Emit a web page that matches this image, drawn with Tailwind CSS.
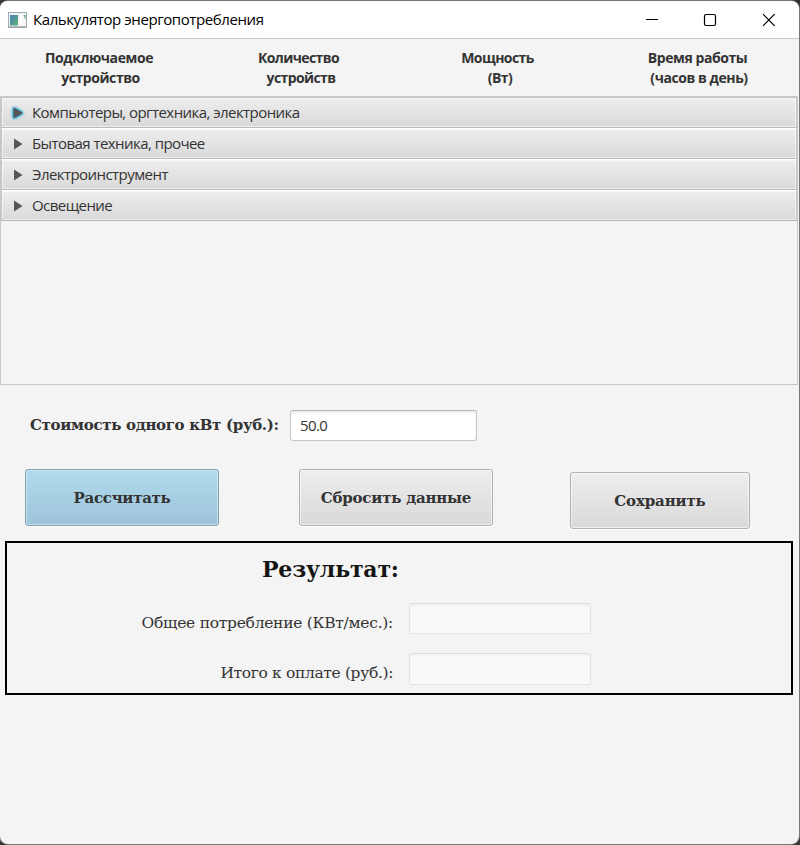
<!DOCTYPE html>
<html lang="ru">
<head>
<meta charset="utf-8">
<title>Калькулятор энергопотребления</title>
<script src="https://cdn.jsdelivr.net/npm/@tailwindcss/browser@4"></script>
</head>
<body class="w-[800px] h-[845px] overflow-hidden bg-[#353537] pt-px font-['Open_Sans','Noto_Sans',sans-serif] text-[#333]">
<div class="w-[799px] h-[843px] rounded-[8px] overflow-hidden bg-[#f4f4f4] flex flex-col shadow-[0_0_0_1px_#77777a]">
  <header class="h-[38px] shrink-0 bg-white border-b border-[#c8c8c8] flex items-center pl-2">
    <svg class="w-[19px] h-[16px] shrink-0" viewBox="0 0 19 16">
      <defs><linearGradient id="g" x1="0" y1="0" x2="1" y2="1"><stop offset="0" stop-color="#4a7fb5"/><stop offset="1" stop-color="#5cb370"/></linearGradient></defs>
      <rect x=".5" y=".5" width="18" height="14.5" fill="#f2f4f6" stroke="#a2a9b0"/>
      <path d="M.5 15.2H18.5" stroke="#858c92"/>
      <rect x="2" y="3" width="8" height="10.5" fill="url(#g)"/>
      <rect x="12" y="3" width="2.5" height="10" fill="#fff"/>
      <path d="M15.5 3H17.5V8Z" fill="#59a58e"/>
    </svg>
    <h1 class="ml-[6px] w-[240px] pb-[2px] whitespace-nowrap text-[15px] leading-5 tracking-[-0.41px] text-black">Калькулятор энергопотребления</h1>
    <svg class="ml-auto mr-[22px] w-[132px] h-[14px]" viewBox="0 0 132 14" fill="none" stroke="#000" stroke-width="1.2">
      <path d="M1 6.5H13"/><rect x="59.5" y="1.5" width="11" height="11" rx="1.5"/><path d="M118 1.2L129.6 12.8M129.6 1.2L118 12.8"/>
    </svg>
  </header>
  <div class="h-[57px] shrink-0 flex pt-[9px] text-[14px] leading-5 font-bold text-center whitespace-nowrap">
    <div class="w-[198px] tracking-[-0.42px]"><p>Подключаемое</p><p class="pl-[3px]">устройство</p></div>
    <div class="w-[201px] tracking-[-0.6px]"><p>Количество</p><p class="pl-[5px]">устройств</p></div>
    <div class="w-[197px] tracking-[-0.58px]"><p>Мощность</p><p class="pl-[5px]">(Вт)</p></div>
    <div class="w-[203px] tracking-[-0.43px]"><p>Время работы</p><p class="pl-[3px]">(часов в день)</p></div>
  </div>
  <section class="w-[798px] h-[289px] shrink-0 border border-[#c8c8c8] text-[15px] tracking-[-0.56px]">
    <div class="h-[31px] border border-t-[#c3c3c3] border-x-[#c8c8c8] border-b-[#bababa] bg-linear-to-b from-[#eeeeee] to-[#d9d9d9] shadow-[inset_0_0_0_1px_#fff8] flex items-center">
      <svg class="ml-[8px] w-[16px] h-[18px] overflow-visible" viewBox="0 0 16 18"><path d="M3.5 3.5V14.5L13 9Z" fill="#555" class="[filter:drop-shadow(0_0_1.5px_#039ed3)_drop-shadow(0_0_1px_#039ed3)]"/></svg><span class="ml-[6px]">Компьютеры, оргтехника, электроника</span></div>
    <div class="h-[31px] border border-t-white border-x-[#c8c8c8] border-b-[#bababa] bg-linear-to-b from-[#eeeeee] to-[#d9d9d9] shadow-[inset_0_0_0_1px_#fff8] flex items-center">
      <svg class="ml-[8px] w-[16px] h-[18px]" viewBox="0 0 16 18"><path d="M4 3.5V14.5L12.5 9Z" fill="#555"/></svg><span class="ml-[6px]">Бытовая техника, прочее</span></div>
    <div class="h-[31px] border border-t-white border-x-[#c8c8c8] border-b-[#bababa] bg-linear-to-b from-[#eeeeee] to-[#d9d9d9] shadow-[inset_0_0_0_1px_#fff8] flex items-center">
      <svg class="ml-[8px] w-[16px] h-[18px]" viewBox="0 0 16 18"><path d="M4 3.5V14.5L12.5 9Z" fill="#555"/></svg><span class="ml-[6px]">Электроинструмент</span></div>
    <div class="h-[31px] border border-t-white border-x-[#c8c8c8] border-b-[#b5b5b5] bg-linear-to-b from-[#eeeeee] to-[#d9d9d9] shadow-[inset_0_0_0_1px_#fff8] flex items-center">
      <svg class="ml-[8px] w-[16px] h-[18px]" viewBox="0 0 16 18"><path d="M4 3.5V14.5L12.5 9Z" fill="#555"/></svg><span class="ml-[6px]">Освещение</span></div>
  </section>
  <div class="mt-[25px] pl-[30px] flex h-[31px] shrink-0 items-center">
    <label class="w-[260px] whitespace-nowrap font-['DejaVu_Serif',serif] font-bold text-[15px] tracking-[-0.32px]">Стоимость одного кВт (руб.):</label>
    <div class="w-[187px] h-[31px] rounded-[3px] bg-white border border-[#c6c6c6] border-t-[#b5b5b5] shadow-[inset_0_2px_2px_#eee] pl-[9px] text-[15px] leading-[29px] tracking-[-0.6px]">50.0</div>
  </div>
  <div class="mt-[28px] pl-[25px] flex h-[60px] shrink-0 items-start font-['DejaVu_Serif',serif] font-bold text-[15px] whitespace-nowrap">
    <button class="w-[194px] h-[57px] pt-px rounded-[3px] border border-[#7fa3b1] bg-linear-to-b from-[#b1dbed] to-[#9dc3d8] shadow-[inset_0_0_0_1px_#ffffff66,0_1px_0_#fff] tracking-[-0.3px]">Рассчитать</button>
    <button class="ml-[80px] w-[194px] h-[57px] pt-px rounded-[3px] border border-[#b1b1b1] bg-linear-to-b from-[#eeeeee] to-[#d9d9d9] shadow-[inset_0_0_0_1px_#ffffff88,0_1px_0_#fff] tracking-[-0.22px]">Сбросить данные</button>
    <button class="ml-[77px] mt-[3px] w-[180px] h-[57px] pt-px rounded-[3px] border border-[#b1b1b1] bg-linear-to-b from-[#eeeeee] to-[#d9d9d9] shadow-[inset_0_0_0_1px_#ffffff88,0_1px_0_#fff] tracking-[-0.15px]">Сохранить</button>
  </div>
  <section class="ml-[5px] mt-[12px] w-[788px] h-[154px] shrink-0 border-2 border-black font-['DejaVu_Serif',serif] whitespace-nowrap">
    <h2 class="ml-[255px] mt-[9px] h-[34px] leading-[34px] font-bold text-[22px] tracking-[-0.2px] text-[#151515]">Результат:</h2>
    <div class="mt-[17px] flex h-[31px]">
      <p class="w-[386px] text-right text-[15.5px] leading-[41px] tracking-[-0.28px]">Общее потребление (КВт/мес.):</p>
      <div class="ml-[16px] w-[182px] h-[31px] rounded-[3px] bg-[#f9f9f9] border border-[#e3e3e3] border-t-[#dcdcdc] shadow-[inset_0_2px_2px_#f3f3f3]"></div>
    </div>
    <div class="mt-[19px] flex h-[32px]">
      <p class="w-[386px] text-right text-[15.5px] leading-[41px] tracking-[-0.36px]">Итого к оплате (руб.):</p>
      <div class="ml-[16px] w-[182px] h-[32px] rounded-[3px] bg-[#f9f9f9] border border-[#e3e3e3] border-t-[#dcdcdc] shadow-[inset_0_2px_2px_#f3f3f3]"></div>
    </div>
  </section>
</div>
</body>
</html>
